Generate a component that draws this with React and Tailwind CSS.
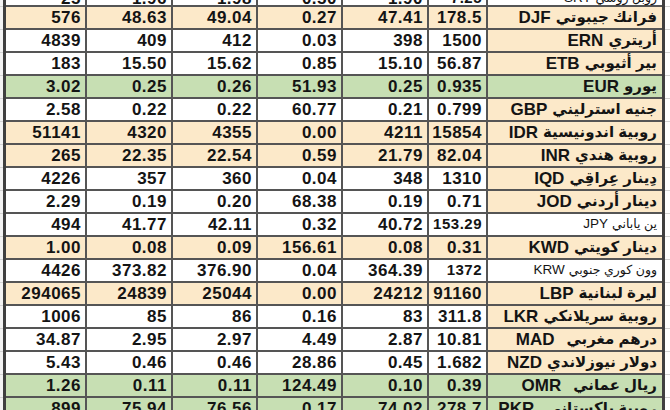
import React from "react";

const B = "bg-[#fce9c9]";
const G = "bg-[#c7dfb3]";
const W = "bg-white";

const rows = [
  { v: ["25", "1.96", "1.98", "0.50", "1.90", "7.25"], name: "روبل روسي", code: "SRY", bg: W, nbg: W, small: true, top: true },
  { v: ["576", "48.63", "49.04", "0.27", "47.41", "178.5"], name: "فرانك جيبوتي", code: "DJF", bg: B, nbg: B },
  { v: ["4839", "409", "412", "0.03", "398", "1500"], name: "أريتري", code: "ERN", bg: W, nbg: B },
  { v: ["183", "15.50", "15.62", "0.85", "15.10", "56.87"], name: "بير أثيوبي", code: "ETB", bg: W, nbg: B },
  { v: ["3.02", "0.25", "0.26", "51.93", "0.25", "0.935"], name: "يورو", code: "EUR", bg: G, nbg: G },
  { v: ["2.58", "0.22", "0.22", "60.77", "0.21", "0.799"], name: "جنيه استرليني", code: "GBP", bg: W, nbg: B },
  { v: ["51141", "4320", "4355", "0.00", "4211", "15854"], name: "روبية اندونيسية", code: "IDR", bg: B, nbg: B },
  { v: ["265", "22.35", "22.54", "0.59", "21.79", "82.04"], name: "روبية هندي", code: "INR", bg: B, nbg: B },
  { v: ["4226", "357", "360", "0.04", "348", "1310"], name: "دِينار عِراقِي", code: "IQD", bg: W, nbg: B },
  { v: ["2.29", "0.19", "0.20", "68.38", "0.19", "0.71"], name: "دينار أردني", code: "JOD", bg: W, nbg: B },
  { v: ["494", "41.77", "42.11", "0.32", "40.72", "153.29"], name: "ين ياباني", code: "JPY", bg: W, nbg: W, small: true },
  { v: ["1.00", "0.08", "0.09", "156.61", "0.08", "0.31"], name: "دينار كويتي", code: "KWD", bg: B, nbg: B },
  { v: ["4426", "373.82", "376.90", "0.04", "364.39", "1372"], name: "وون كوري جنوبي", code: "KRW", bg: W, nbg: W, small: true },
  { v: ["294065", "24839", "25044", "0.00", "24212", "91160"], name: "ليرة لبنانية", code: "LBP", bg: B, nbg: B },
  { v: ["1006", "85", "86", "0.16", "83", "311.8"], name: "روبية سريلانكي", code: "LKR", bg: W, nbg: B },
  { v: ["34.87", "2.95", "2.97", "4.49", "2.87", "10.81"], name: "درهم مغربي", code: "MAD", bg: W, nbg: B, gap: true },
  { v: ["5.43", "0.46", "0.46", "28.86", "0.45", "1.682"], name: "دولار نيوزلاندي", code: "NZD", bg: W, nbg: B },
  { v: ["1.26", "0.11", "0.11", "124.49", "0.10", "0.39"], name: "ريال عماني", code: "OMR", bg: G, nbg: G, gap: true },
  { v: ["899", "75.94", "76.56", "0.17", "74.02", "278.7"], name: "روبية باكستاني", code: "PKR", bg: G, nbg: G, gap: true },
];

const widths = ["w-[81px]", "w-[86px]", "w-[85px]", "w-[85px]", "w-[86px]", "w-[59px]"];

function Row({ r }) {
  return (
    <div className="flex h-[23px]">
      <div className="w-[3px] border-b border-[#d4d4d4] bg-[#f3f3f3]" />
      <div className="flex border-l-[3px] border-r-[3px] border-[#3f3f3f]">
        {r.v.map((n, i) => (
          <div
            key={i}
            className={`${widths[i]} ${r.bg} flex items-center justify-end pr-[4px] border-r-2 border-b-2 border-[#555555] font-bold ${
              r.small && i === 5 ? "text-[15px]" : "text-[17px]"
            } tracking-[0.5px] ${r.top ? "pt-[8px]" : ""}`}
          >
            {n}
          </div>
        ))}
        <div
          dir="ltr"
          className={`w-[174px] ${r.nbg} flex items-center justify-end pr-[5px] border-b-2 border-[#555555] ${r.top ? "pt-[8px]" : ""}`}
        >
          {r.small ? (
            <>
              <span className="text-[13.5px]">{r.code}</span>
              <span className="text-[12.5px] ml-[4px]">{r.name}</span>
            </>
          ) : (
            <>
              <span className="text-[17px] font-bold">{r.code}</span>
              <span className={`text-[15px] font-bold ${r.gap ? "ml-[12px]" : "ml-[5px]"}`}>{r.name}</span>
            </>
          )}
        </div>
      </div>
      <div className="flex-1 border-b border-[#d4d4d4]" />
    </div>
  );
}

export default function App() {
  return (
    <div className="w-[670px] h-[410px] overflow-hidden bg-white text-[#141414] font-['Liberation_Sans','DejaVu_Sans',sans-serif]">
      <div className="-mt-[16px]">
        {rows.map((r, i) => (
          <Row key={i} r={r} />
        ))}
      </div>
    </div>
  );
}
